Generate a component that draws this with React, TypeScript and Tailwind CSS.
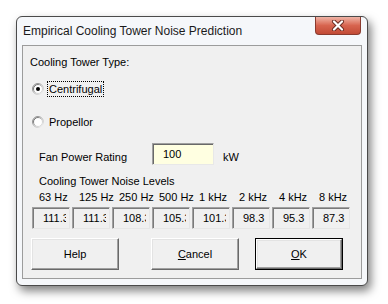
const values = ['111.3', '111.3', '108.3', '105.3', '101.3', '98.3', '95.3', '87.3'];
const freqs = ['63 Hz', '125 Hz', '250 Hz', '500 Hz', '1 kHz', '2 kHz', '4 kHz', '8 kHz'];

function Radio({ checked }: { checked?: boolean }) {
  return (
    <svg width="12" height="12" viewBox="0 0 12 12" className="shrink-0">
      <defs>
        <linearGradient id="ro" x1="0" y1="0" x2="1" y2="1">
          <stop offset="0" stopColor="#7a7a7a" />
          <stop offset="0.55" stopColor="#b8b8b8" />
          <stop offset="1" stopColor="#ffffff" />
        </linearGradient>
        <linearGradient id="ri" x1="0" y1="0" x2="1" y2="1">
          <stop offset="0" stopColor="#404040" />
          <stop offset="0.55" stopColor="#c8c8c8" />
          <stop offset="1" stopColor="#e4e4e4" />
        </linearGradient>
      </defs>
      <circle cx="6" cy="6" r="5.5" fill="none" stroke="url(#ro)" strokeWidth="1" />
      <circle cx="6" cy="6" r="4.5" fill="#ffffff" stroke="url(#ri)" strokeWidth="1" />
      {checked && <circle cx="6" cy="6" r="2" fill="#000000" />}
    </svg>
  );
}

function Button({ children, def }: { children: React.ReactNode; def?: boolean }) {
  return (
    <div
      className={
        def
          ? 'w-[88px] h-[32px] border border-black flex'
          : 'w-[88px] h-[32px] flex'
      }
    >
      <div className="flex-1 flex items-center justify-center bg-[#f0f0f0] border-t border-l border-t-[#ffffff] border-l-[#ffffff] border-b border-r border-b-[#696969] border-r-[#696969] shadow-[inset_-1px_-1px_0_#a0a0a0,inset_1px_1px_0_#e3e3e3]">
        <span className="text-[11px] leading-[14px]">{children}</span>
      </div>
    </div>
  );
}

export default function App() {
  return (
    <div className="w-[388px] h-[304px] bg-white pl-[16px] pt-[16px] font-['Liberation_Sans',Arial,sans-serif] text-black">
      <div className="w-[352px] h-[270px] border border-[#4a4a4a] rounded-[6px] bg-[#f5f7fa] shadow-[3px_5px_10px_rgba(0,0,0,0.5)] flex flex-col px-[5px]">
        {/* title bar */}
        <div className="h-[28px] flex items-start justify-between">
          <div className="h-[28px] flex items-center pl-[1px] text-[12px] text-[#1a1a1a]">
            Empirical Cooling Tower Noise Prediction
          </div>
          <div className="w-[46px] h-[18px] mr-[1px] rounded-b-[4px] border border-t-0 border-[#8a3a2e] bg-gradient-to-b from-[#eeb3a6] via-[#d7644f] to-[#c24a35] flex items-center justify-center">
            <svg width="14" height="11" viewBox="0 0 14 11">
              <path d="M3 1.5 L11 9.5 M11 1.5 L3 9.5" stroke="#6a2a20" strokeWidth="4" strokeLinecap="round" />
              <path d="M3 1.5 L11 9.5 M11 1.5 L3 9.5" stroke="#ffffff" strokeWidth="2.2" strokeLinecap="round" />
            </svg>
          </div>
        </div>

        {/* client area */}
        <div className="h-[234px] border border-[#9c9c9c] bg-[#f0f0f0] flex flex-col pl-[7px] pt-[9px] text-[11px]">
          <div className="h-[14px] leading-[14px]">Cooling Tower Type:</div>

          <div className="mt-[12px] h-[16px] flex items-center">
            <div className="ml-[2px]">
              <Radio checked />
            </div>
            <div className="ml-[3px] h-[16px] px-[1px] border border-dotted border-black flex items-center leading-[14px]">
              Centrifugal
            </div>
          </div>

          <div className="mt-[17px] h-[16px] flex items-center">
            <div className="ml-[2px]">
              <Radio />
            </div>
            <div className="ml-[5px] leading-[14px]">Propellor</div>
          </div>

          <div className="mt-[13px] h-[22px] flex items-start">
            <div className="ml-[9px] w-[113px] mt-[7px] leading-[14px]">Fan Power Rating</div>
            <div className="w-[62px] h-[22px] bg-[#ffffe1] border-t border-l border-t-[#a0a0a0] border-l-[#a0a0a0] border-b border-r border-b-[#e8e8e8] border-r-[#e8e8e8] shadow-[inset_1px_1px_0_#696969] flex items-center pl-[10px] leading-[14px]">
              100
            </div>
            <div className="ml-[9px] mt-[7px] leading-[14px]">kW</div>
          </div>

          <div className="mt-[9px] ml-[9px] h-[14px] leading-[14px]">Cooling Tower Noise Levels</div>

          <div className="mt-[2px] ml-[2px] grid grid-cols-[repeat(8,38px)] gap-x-[2px]">
            {freqs.map((f, i) => (
              <div key={i} className="h-[14px] leading-[14px] pl-[7px] whitespace-nowrap">
                {f}
              </div>
            ))}
          </div>

          <div className="mt-[3px] ml-[2px] grid grid-cols-[repeat(8,38px)] gap-x-[2px]">
            {values.map((v, i) => (
              <div
                key={i}
                className="h-[22px] bg-[#f0f0f0] border-t border-l border-t-[#a0a0a0] border-l-[#a0a0a0] border-b border-r border-b-[#e6e6e6] border-r-[#e6e6e6] shadow-[inset_1px_1px_0_#7a7a7a] flex items-center pl-[10px] pr-[3px]"
              >
                <div className="flex-1 overflow-hidden whitespace-nowrap leading-[14px]">{v}</div>
              </div>
            ))}
          </div>

          <div className="mt-[9px] ml-[1px] flex">
            <Button>Help</Button>
            <div className="ml-[32px]">
              <Button>
                <span className="underline">C</span>ancel
              </Button>
            </div>
            <div className="ml-[16px]">
              <Button def>
                <span className="underline">O</span>K
              </Button>
            </div>
          </div>
        </div>
      </div>
    </div>
  );
}
